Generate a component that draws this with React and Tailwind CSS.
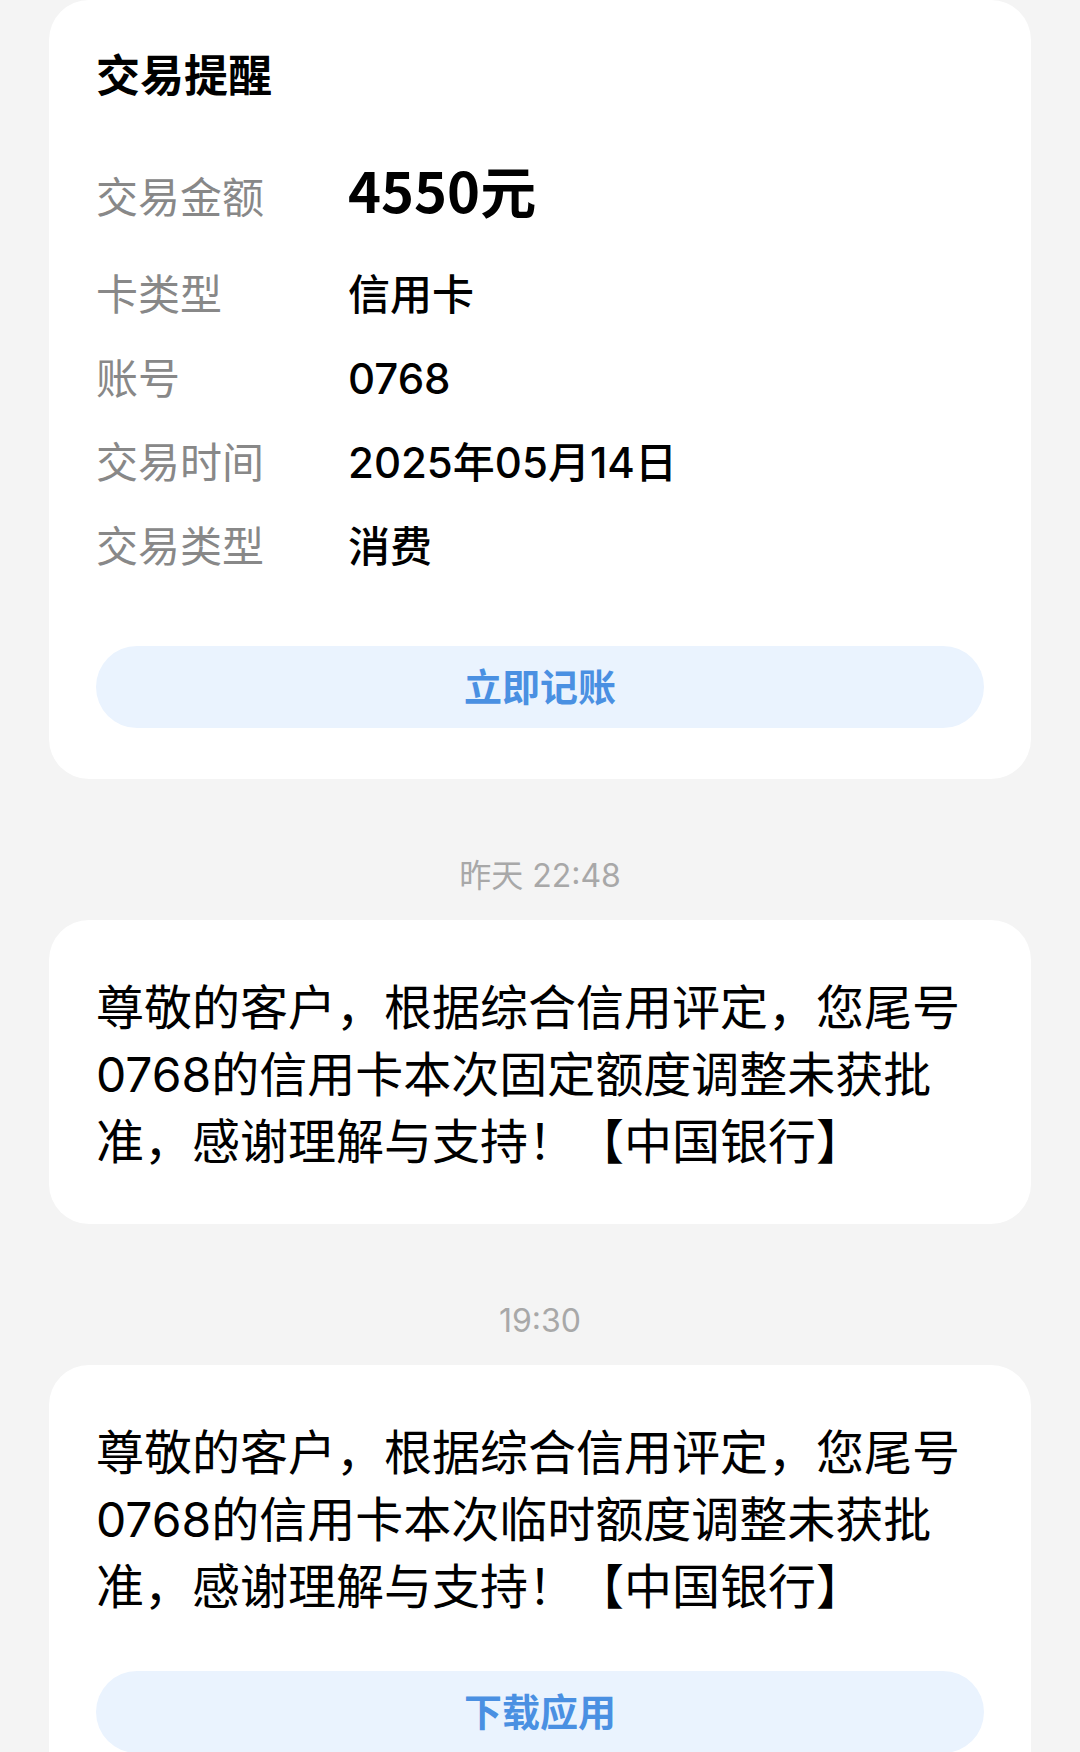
import React from "react";

const font = { fontFamily: 'Inter, "Noto Sans CJK SC", "Noto Sans", sans-serif' };

const rows = [
  { label: "卡类型", value: "信用卡" },
  { label: "账号", value: "0768" },
  { label: "交易时间", value: "2025年05月14日" },
  { label: "交易类型", value: "消费" },
];

const Pill = ({ children, className = "" }) => (
  <div
    className={`flex h-[82px] items-center justify-center rounded-full bg-[#eaf3fe] text-[38px] font-semibold text-[#4a90e2] ${className}`}
  >
    {children}
  </div>
);

const Stamp = ({ children }) => (
  <div className="mt-[75px] mb-[22px] text-center text-[32px] leading-[44px] text-[#a8a8a8]">
    {children}
  </div>
);

const Message = ({ text, button }) => (
  <div className="mx-[49px] rounded-[40px] bg-white px-[47px] pt-[54px] pb-[49px]">
    <p className="text-[48px] leading-[67px] text-black">{text}</p>
    {button && <Pill className="mt-[51px]">{button}</Pill>}
  </div>
);

export default function App() {
  return (
    <div className="min-h-screen bg-[#f4f4f4] pb-10" style={font}>
      <div className="mx-[49px] rounded-[40px] bg-white px-[47px] pt-[46px] pb-[51px]">
        <div className="text-[44px] leading-[60px] font-bold text-black">交易提醒</div>

        <div className="mt-[55px]">
          <div className="flex h-[91px] items-baseline">
            <span className="w-[252px] shrink-0 text-[42px] leading-[59px] text-[#888888]">
              交易金额
            </span>
            <span className="font-['Noto_Sans_CJK_SC'] text-[56px] leading-none font-bold text-black">
              4550元
            </span>
          </div>
          {rows.map((r) => (
            <div key={r.label} className="flex h-[84px] items-center">
              <span className="w-[252px] shrink-0 text-[42px] leading-[59px] text-[#888888]">
                {r.label}
              </span>
              <span className="text-[42px] leading-[59px] font-medium text-black">
                {r.value}
              </span>
            </div>
          ))}
        </div>

        <Pill className="mt-[58px]">立即记账</Pill>
      </div>

      <Stamp>昨天 22:48</Stamp>
      <Message text="尊敬的客户，根据综合信用评定，您尾号0768的信用卡本次固定额度调整未获批准，感谢理解与支持！【中国银行】" />

      <Stamp>19:30</Stamp>
      <Message
        text="尊敬的客户，根据综合信用评定，您尾号0768的信用卡本次临时额度调整未获批准，感谢理解与支持！【中国银行】"
        button="下载应用"
      />
    </div>
  );
}
